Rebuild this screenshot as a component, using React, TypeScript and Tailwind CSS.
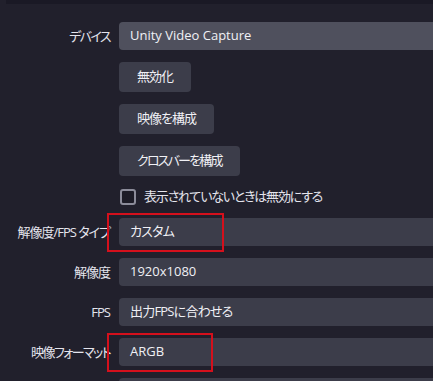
import React from 'react';

const font = { fontFamily: '"Open Sans", "Noto Sans CJK JP", sans-serif' };

function Label({ children, tight }: { children: React.ReactNode; tight?: boolean }) {
  return (
    <div
      className={`w-[112px] shrink-0 pr-[2px] text-right text-[13px] leading-none text-[#e4e4ec] whitespace-nowrap ${
        tight ? 'tracking-[-1.6px]' : 'tracking-[-1px]'
      }`}
    >
      {children}
    </div>
  );
}

function Combo({ value, hover, mark, jp }: { value: string; hover?: boolean; mark?: string; jp?: boolean }) {
  return (
    <div className="relative flex-1">
      <div
        className={`flex h-[28px] items-center rounded-[4px] pl-[11px] text-[13px] text-[#f0f0f5] ${
          hover ? 'bg-[#4f505d]' : 'bg-[#3c3d4a]'
        } ${jp ? 'tracking-[-0.8px]' : ''}`}
      >
        {value}
      </div>
      {mark && <div className={`absolute -top-[5px] -left-[12px] h-[39px] border-2 border-[#d4101c] ${mark}`} />}
    </div>
  );
}

function Row({ label, tight, children }: { label?: string; tight?: boolean; children: React.ReactNode }) {
  return (
    <div className="flex items-center gap-[7px]">
      <Label tight={tight}>{label}</Label>
      {children}
    </div>
  );
}

function Button({ children, tight }: { children: React.ReactNode; tight?: boolean }) {
  return (
    <div
      className={`flex h-[30px] items-center rounded-[4px] bg-[#3c3d4a] px-[18px] text-[13px] text-[#f0f0f5] ${
        tight ? 'tracking-[-1.8px]' : 'tracking-[-1px]'
      }`}
    >
      {children}
    </div>
  );
}

export default function App() {
  return (
    <div className="h-[381px] w-[433px] overflow-hidden bg-[#21202c] [font-feature-settings:'palt']" style={font}>
      <div className="ml-[6px] h-[4px] bg-[#1a1925]" />
      <div className="mt-[18px] flex flex-col gap-[12px] mr-[-20px]">
        <Row label="デバイス" tight>
          <Combo value="Unity Video Capture" hover />
        </Row>
        <Row>
          <Button>無効化</Button>
        </Row>
        <Row>
          <Button>映像を構成</Button>
        </Row>
        <Row>
          <Button tight>クロスバーを構成</Button>
        </Row>
        <Row>
          <div className="flex h-[18px] items-center gap-[8px] pl-[1px]">
            <div className="h-[16px] w-[16px] rounded-[3px] border-2 border-[#8c8c9a] bg-[#1d1c27]" />
            <span className="text-[13px] tracking-[-1.2px] text-[#e4e4ec]">表示されていないときは無効にする</span>
          </div>
        </Row>
        <Row label="解像度/FPS タイプ">
          <Combo value="カスタム" mark="w-[117px]" jp />
        </Row>
        <Row label="解像度">
          <Combo value="1920x1080" />
        </Row>
        <Row label="FPS">
          <Combo value="出力FPSに合わせる" jp />
        </Row>
        <Row label="映像フォーマット" tight>
          <Combo value="ARGB" mark="w-[106px]" />
        </Row>
        <Row label="">
          <Combo value="" />
        </Row>
      </div>
    </div>
  );
}
